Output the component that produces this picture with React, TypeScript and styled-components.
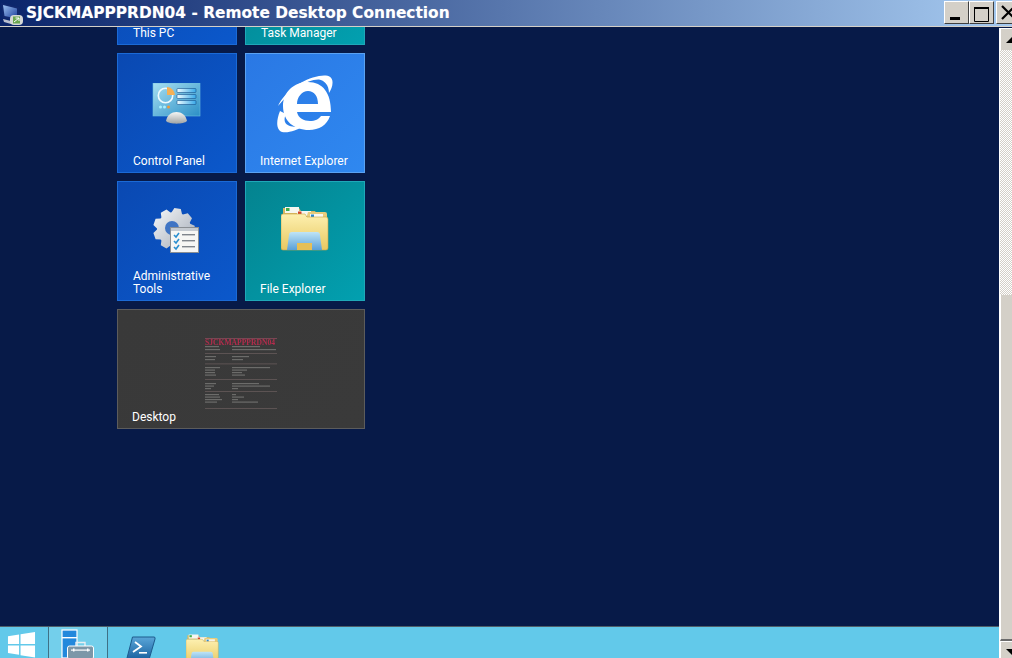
import React from "react";
import styled, { createGlobalStyle } from "styled-components";

const Global = createGlobalStyle`
  html, body { margin: 0; padding: 0; background: #071a48; overflow: hidden; }
  #root { width: 1012px; height: 658px; overflow: hidden; }
`;

const Window = styled.div`
  width: 1012px; height: 658px; display: flex; flex-direction: column; overflow: hidden;
`;
const TitleBar = styled.header`
  flex: 0 0 27px; height: 27px; box-sizing: border-box; border-bottom: 1px solid #d4d0c8;
  background: linear-gradient(90deg, #0a246a 0%, #a6caf0 100%);
  display: flex; align-items: center; color: #fff;
`;
const AppIcon = styled.svg`flex: none; width: 24px; height: 25px;`;
const Title = styled.h1`
  margin: 1px 0 0 2px; font: bold 15.4px/25px "DejaVu Sans", sans-serif; white-space: nowrap; flex: 1;
  text-shadow: 0 0 1px rgba(255,255,255,.3);
`;
const Controls = styled.div`display: flex; align-self: flex-start; margin-top: 1px; margin-right: -9px;`;
const CtlButton = styled.button<{ $gap?: number }>`
  width: 25px; height: 23px; padding: 0; margin-left: ${p => p.$gap ?? 0}px; box-sizing: border-box;
  background: #d4d0c8; border: 1px solid; border-color: #fff #404040 #404040 #fff;
  display: flex; align-items: center; justify-content: center;
`;
const Body = styled.div`flex: 1; display: flex; min-height: 0;`;
const Main = styled.main`flex: 0 0 999px; display: flex; flex-direction: column; min-width: 0;`;
const Stage = styled.section`
  flex: 1; min-height: 0; overflow: hidden; background: #071a48; padding-left: 117px;
`;
const TileGrid = styled.div`
  display: grid; grid-template-columns: 120px 120px; grid-auto-rows: 120px; gap: 8px; margin-top: -102px;
`;
const tones = {
  blue: ["#0a49b2", "#0b58cb", "#1b6ad6"],
  sky: ["#2a78e4", "#2f88f0", "#5aa2f2"],
  teal: ["#04838f", "#02a0b0", "#1fa8b8"],
  slate: ["#393939", "#3a3a3a", "#5c5c5c"],
};
const Tile = styled.div<{ $tone: keyof typeof tones; $wide?: boolean }>`
  box-sizing: border-box; border: 1px solid ${p => tones[p.$tone][2]};
  background: linear-gradient(135deg, ${p => tones[p.$tone][0]}, ${p => tones[p.$tone][1]});
  display: flex; flex-direction: column; align-items: center; overflow: hidden;
  ${p => p.$wide && "grid-column: span 2;"}
`;
const TileIcon = styled.svg<{ $top: number }>`
  flex: none; margin-top: ${p => p.$top}px; filter: blur(.35px);
`;
const TileLabel = styled.span<{ $inset?: number; $bottom?: number }>`
  margin-top: auto; align-self: stretch; padding: 0 0 ${p => p.$bottom ?? 4}px ${p => p.$inset ?? 15}px;
  font: 12px/13px Roboto, sans-serif; color: #fff;
`;
const Thumb = styled.div`
  flex: none; margin-top: 21px; width: 90px; height: 80px; margin-left: -2px; position: relative;
`;
const ThumbTitle = styled.span`
  position: absolute; left: 10px; top: 7px; font: bold 7.6px/9px "Liberation Serif", serif; color: #b42c4c;
  white-space: nowrap; filter: blur(.25px);
`;
const ThumbSvg = styled.svg`display: block; filter: blur(.6px);`;
const Taskbar = styled.footer`
  flex: 0 0 32px; height: 32px; box-sizing: border-box; border-top: 1px solid #4f5f68;
  background: #62c9ea; display: flex; overflow: hidden;
`;
const TaskSlot = styled.div<{ $w: number; $active?: boolean; $sep?: boolean; $shift?: number }>`
  flex: none; width: ${p => p.$w}px; box-sizing: border-box; display: flex; justify-content: center;
  padding-right: ${p => p.$shift ?? 0}px;
  ${p => p.$sep && "border-right: 1px solid #3f7186;"}
  ${p => p.$active && "background: #73cfeb;"}
`;
const TaskIcon = styled.svg<{ $top: number }>`flex: none; margin-top: ${p => p.$top}px; overflow: hidden;`;
const Scrollbar = styled.aside`
  flex: 0 0 26px; width: 26px; height: 640px; margin-top: 1px; box-sizing: border-box; display: flex; flex-direction: column;
  border-left: 1px solid #fff;
`;
const ScrollBtn = styled.div`
  flex: none; height: 22px; box-sizing: border-box; background: #d4d0c8; border-left: 1px solid #fff; border-top: 1px solid #fff;
  display: flex; align-items: center; justify-content: center;
`;
const Track = styled.div`
  flex: 0 0 245px;
  background-color: #fff;
  background-image: conic-gradient(#d4d0c8 25%, #fff 0 50%, #d4d0c8 0 75%, #fff 0);
  background-size: 2px 2px;
`;
const ThumbBar = styled.div`
  flex: 0 0 346px; box-sizing: border-box; background: #d4d0c8; border-bottom: 2px solid #6b6b6b; border-left: 1px solid #fff;
`;

const Arrow = ({ up }: { up?: boolean }) => (
  <svg width="14" height="7" viewBox="0 0 14 7">
    <path d={up ? "M7 0 14 7H0Z" : "M0 0H14L7 7Z"} fill="#000" />
  </svg>
);

const RemoteIcon = () => (
  <AppIcon viewBox="0 0 24 25">
    <defs>
      <linearGradient id="scr" x1="0" y1="0" x2="1" y2="1">
        <stop offset="0" stopColor="#9cc0f0" /><stop offset="1" stopColor="#1c3f9c" />
      </linearGradient>
    </defs>
    <path d="M1 2 19 6V20L3 17Z" fill="#11286e" />
    <path d="M3 4 17 7.500V17.500L4.500 15Z" fill="url(#scr)" />
    <path d="M3 18 11 20V23L4 21Z" fill="#b9bfd0" />
    <rect x="10" y="14" width="13" height="10" rx="4" fill="#d5d8d6" />
    <rect x="13" y="15.500" width="7" height="7" fill="#6aa650" />
    <path d="M14 21 19 17M15.500 17h3.500v3" stroke="#fff" strokeWidth="1" fill="none" />
  </AppIcon>
);

const ControlPanelIcon = () => (
  <TileIcon $top={29} width="50" height="42" viewBox="0 0 50 42">
    <defs>
      <linearGradient id="cpw" x1="0" y1="0" x2="1" y2="1">
        <stop offset="0" stopColor="#a8e0f2" /><stop offset="1" stopColor="#2b8fc6" />
      </linearGradient>
      <linearGradient id="cpd" x1="0" y1="0" x2="0" y2="1">
        <stop offset="0" stopColor="#f6f6f4" /><stop offset="1" stopColor="#a0a4a4" />
      </linearGradient>
      <linearGradient id="cpb" x1="0" y1="0" x2="1" y2="0">
        <stop offset="0" stopColor="#eefcff" /><stop offset="1" stopColor="#38a8e8" />
      </linearGradient>
    </defs>
    <rect x="1" y="0" width="47" height="33" fill="url(#cpw)" stroke="#6cc0e0" strokeWidth=".6" />
    <circle cx="13.500" cy="12.500" r="7.200" fill="none" stroke="#f0fafd" strokeWidth="1.600" />
    <path d="M15 4h.5A8.500 8.500 0 0 1 23 12h-8Z" fill="#f5b055" />
    {[7, 13, 19].map(y => (
      <rect key={y} x="25" y={y - 1.5} width="19" height="4" rx=".8" fill="url(#cpb)" stroke="#16508c" strokeWidth=".6" />
    ))}
    <circle cx="8.500" cy="24" r="1.500" fill="#a8f0ff" /><circle cx="12.500" cy="24" r="1.500" fill="#a8f0ff" />
    <circle cx="16.500" cy="24" r="1.500" fill="#f09a38" />
    <path d="M14 38C16 26 33 26 35 38 32 41.500 17 41.500 14 38Z" fill="url(#cpd)" />
  </TileIcon>
);

const IeIcon = () => (
  <TileIcon $top={21} width="56" height="58" viewBox="0 0 56 58">
    <path fillRule="evenodd" fill="#fff" d="M54 37H20C21 43 27 46 33 46C38 46 42 44 44 41H53C50 50 42 55 32 55C17 55 6 46 6 31C6 17 17 7 31 7C46 7 54 18 54 37ZM20 29H41C41 21 37 16 31 16C25 16 20 22 20 29Z" />
    <path fill="#fff" d="M1 31C8 16 26 4 42 1C50 -.5 56 1 55.500 8C55.500 11 54 15 52 18C52 10 47 5 42 4.500C30 4 14 15 1 31Z" />
    <path fill="#fff" d="M3 36C-1 46 -1 55 5 57C11 58.500 20 55 27 51C19 52.500 10 52 8 47C7 44 8 41 9 39Z" />
  </TileIcon>
);

const gearPath = (() => {
  const pts: string[] = [];
  const n = 9, cx = 21, cy = 23, R = 21, r = 17;
  for (let i = 0; i < n; i++) {
    const a = (i / n) * Math.PI * 2, s = Math.PI / n;
    const p = (ang: number, rad: number) => `${(cx + Math.cos(ang) * rad).toFixed(1)} ${(cy + Math.sin(ang) * rad).toFixed(1)}`;
    pts.push(p(a - s * .9, r), p(a - s * .45, R), p(a + s * .45, R), p(a + s * .9, r));
  }
  return "M" + pts.join("L") + "Z";
})();

const AdminIcon = () => (
  <TileIcon $top={24} width="48" height="48" viewBox="0 0 48 48">
    <defs>
      <linearGradient id="gr" x1="0" y1="0" x2="1" y2="1">
        <stop offset="0" stopColor="#f6f8fa" /><stop offset="1" stopColor="#a0a8b4" />
      </linearGradient>
    </defs>
    <path d={gearPath} fill="url(#gr)" />
    <circle cx="19" cy="22" r="7" fill="#3f74c4" />
    <rect x="17.500" y="21.500" width="28" height="25" fill="#f6f6f4" stroke="#8a8f94" strokeWidth="1" />
    <rect x="18" y="22" width="27" height="3" fill="#c5cad0" />
    {[29, 35, 41].map(y => (
      <g key={y}>
        <path d={`M21 ${y}l2 2 3-4`} stroke="#2a8fd0" strokeWidth="1.600" fill="none" />
        <rect x="29" y={y - 1} width="13" height="1.400" fill="#7f858c" />
      </g>
    ))}
  </TileIcon>
);

const FolderArt = ({ id }: { id: string }) => (
  <>
    <defs>
      <linearGradient id={id} x1="0" y1="0" x2="0" y2="1">
        <stop offset="0" stopColor="#fdf0b0" /><stop offset="1" stopColor="#e8c860" />
      </linearGradient>
      <linearGradient id={id + "w"} x1="0" y1="0" x2="0" y2="1">
        <stop offset="0" stopColor="#bfe4f6" /><stop offset="1" stopColor="#5aa0d8" />
      </linearGradient>
    </defs>
    <path d="M2 3h16l2 3h14l2 3H2Z" fill="#d9b862" />
    <rect x="4" y="2" width="14" height="6" fill="#f6f6f0" />
    <rect x="5" y="3" width="3.500" height="3" fill="#3fae48" />
    <rect x="16" y="6" width="14" height="5" fill="#f6f6f0" />
    <rect x="17" y="6.500" width="3.500" height="3" fill="#d2402a" />
    <path d="M27 7h17a2 2 0 0 1 2 2v5H25Z" fill="#e8cc7c" />
    <rect x="29" y="9" width="13" height="4" fill="#f8f8f4" />
    <rect x="30" y="9.500" width="3" height="3" fill="#2a8ad0" />
    <path d="M0 11Q0 9 2 9H24L26 12H45Q47 12 47 14V43Q47 45 45 45H2Q0 45 0 43Z" fill={`url(#${id})`} stroke="#c9a547" strokeWidth=".6" />
    <path d="M8 30Q8 27 11 27H36Q39 27 39 30L41 45H6Z" fill={`url(#${id}w)`} />
    <path d="M16 38H31V45H16Z" fill="#e6bf56" />
  </>
);
const FolderIcon = () => (
  <TileIcon $top={23} width="48" height="48" viewBox="0 0 48 48"><FolderArt id="fe" /></TileIcon>
);

const SMUDGES: [number, number, number][] = [
  [10, 15, 14], [37, 15, 28], [10, 18, 15], [37, 18, 44],
  [10, 25, 11], [37, 25, 17], [10, 28, 10], [37, 28, 11],
  [10, 36, 15], [37, 36, 38], [10, 38.500, 10], [37, 38.500, 15], [10, 41, 10], [37, 41, 10], [10, 43.500, 11], [37, 43.500, 13],
  [10, 52, 11], [37, 52, 27], [10, 54.500, 9], [37, 54.500, 38], [10, 57, 6], [37, 57, 6],
  [10, 63, 14], [37, 63, 4], [10, 65.500, 15], [37, 65.500, 12], [10, 68, 17], [37, 68, 6], [10, 70.500, 12], [37, 70.500, 26],
];
const RULES = [7, 22, 32.500, 48, 60, 77];

const DesktopThumb = () => (
  <Thumb>
    <ThumbSvg width="90" height="80" viewBox="0 0 90 80">
      {RULES.map((y, i) => <rect key={y} x="10" y={y} width="72" height=".8" fill={i === 0 ? "#8a4c5c" : "#665a5a"} />)}
      {SMUDGES.map(([x, y, w], i) => <rect key={i} x={x} y={y} width={w} height="1.200" fill="#6c6c6a" />)}
    </ThumbSvg>
    <ThumbTitle>SJCKMAPPPRDN04</ThumbTitle>
  </Thumb>
);

export default function App() {
  return (
    <Window>
      <Global />
      <TitleBar>
        <RemoteIcon />
        <Title>SJCKMAPPPRDN04 - Remote Desktop Connection</Title>
        <Controls>
          <CtlButton aria-label="Minimize">
            <svg width="14" height="15" viewBox="0 0 14 15"><rect x="0" y="12" width="10" height="3" fill="#000" /></svg>
          </CtlButton>
          <CtlButton aria-label="Maximize">
            <svg width="15" height="19" viewBox="0 0 15 19"><path d="M.5 5h14v13.500H.5Z" fill="none" stroke="#000" /><rect x="0" y="4" width="15" height="2" fill="#000" /></svg>
          </CtlButton>
          <CtlButton aria-label="Close" $gap={2}>
            <svg width="15" height="15" viewBox="0 0 15 15"><path d="M1 1 14 14M14 1 1 14" stroke="#000" strokeWidth="2.200" /></svg>
          </CtlButton>
        </Controls>
      </TitleBar>
      <Body>
        <Main>
          <Stage>
            <TileGrid>
              <Tile $tone="blue"><TileLabel>This PC</TileLabel></Tile>
              <Tile $tone="teal"><TileLabel>Task Manager</TileLabel></Tile>
              <Tile $tone="blue"><ControlPanelIcon /><TileLabel>Control Panel</TileLabel></Tile>
              <Tile $tone="sky"><IeIcon /><TileLabel $inset={14}>Internet Explorer</TileLabel></Tile>
              <Tile $tone="blue"><AdminIcon /><TileLabel>Administrative<br />Tools</TileLabel></Tile>
              <Tile $tone="teal"><FolderIcon /><TileLabel $inset={14}>File Explorer</TileLabel></Tile>
              <Tile $tone="slate" $wide><DesktopThumb /><TileLabel $inset={14} $bottom={5}>Desktop</TileLabel></Tile>
            </TileGrid>
          </Stage>
          <Taskbar>
            <TaskSlot $w={49} $sep $shift={5}>
              <TaskIcon $top={4} width="29" height="27" viewBox="0 0 30 27">
                <path fill="#fff" d="M1 5 12.500 3.200V13H1ZM14 3 29 .5V13H14ZM1 14.500H12.500V24L1 22.300ZM14 14.500H29V27L14 24.500Z" />
              </TaskIcon>
            </TaskSlot>
            <TaskSlot $w={59} $active $sep>
              <TaskIcon $top={2} width="34" height="29" viewBox="0 0 34 29">
                <rect x="1" y="1" width="15" height="28" fill="#2388dc" stroke="#fff" strokeWidth="1.200" />
                <rect x="1" y="8" width="15" height="1.400" fill="#fff" />
                <path d="M15 17V13.500H24V17" fill="none" stroke="#e8eef2" strokeWidth="1.400" />
                <rect x="6.500" y="17" width="26" height="13" rx="2" fill="#7c97a8" stroke="#fff" strokeWidth="1" />
                <rect x="10" y="20.500" width="19" height="1.200" fill="#fff" />
                <rect x="12" y="19.500" width="1.500" height="3" fill="#fff" /><rect x="26" y="19.500" width="1.500" height="3" fill="#fff" />
              </TaskIcon>
            </TaskSlot>
            <TaskSlot $w={66}>
              <TaskIcon $top={9} width="30" height="24" viewBox="0 0 30 24">
                <defs>
                  <linearGradient id="ps" x1="0" y1="0" x2="0" y2="1">
                    <stop offset="0" stopColor="#5aa6d8" /><stop offset="1" stopColor="#1a62a0" />
                  </linearGradient>
                </defs>
                <path d="M6.500 1H28Q29.500 1 29 3L23.500 22Q23 23.500 21 23.500H2Q.5 23.500 1 22Z" fill="url(#ps)" stroke="#1d5a8c" strokeWidth="1" />
                <path d="M9 6 15 10.500 7 16" fill="none" stroke="#fff" strokeWidth="1.800" />
                <rect x="13" y="16" width="8" height="1.600" fill="#fff" />
              </TaskIcon>
            </TaskSlot>
            <TaskSlot $w={56}>
              <TaskIcon $top={6} width="33" height="25" viewBox="0 0 48 36"><FolderArt id="tb" /></TaskIcon>
            </TaskSlot>
          </Taskbar>
        </Main>
        <Scrollbar>
          <ScrollBtn><Arrow up /></ScrollBtn>
          <Track />
          <ThumbBar />
          <ScrollBtn><Arrow /></ScrollBtn>
        </Scrollbar>
      </Body>
    </Window>
  );
}
